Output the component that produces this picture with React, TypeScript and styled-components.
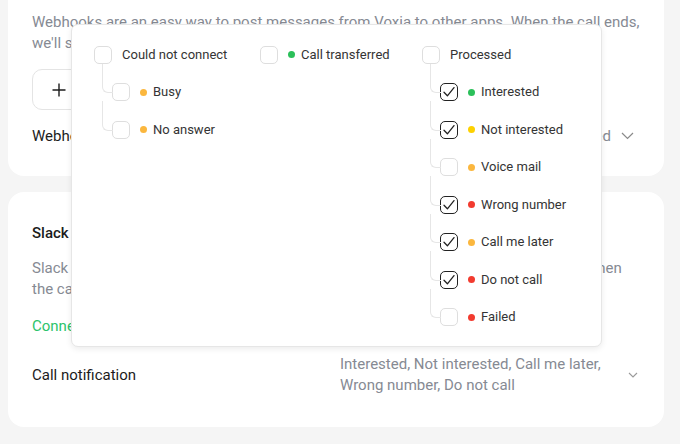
import React from 'react';
import styled, { createGlobalStyle, css } from 'styled-components';

const Global = createGlobalStyle`
  html, body { margin: 0; padding: 0; background: #f5f5f5; }
  body { font-family: Roboto, "Noto Sans", sans-serif; overflow: hidden; }
  * { box-sizing: border-box; }
`;

const Page = styled.div`
  position: relative;
  width: 680px;
  height: 444px;
  overflow: hidden;
  padding: 0 16px 0 8px;
  display: flex;
  flex-direction: column;
  gap: 16px;
`;

const Card = styled.section<{ $top?: number; $bottom?: number }>`
  background: #fff;
  border-radius: 16px;
  padding: 30px 24px ${(p) => p.$bottom ?? 29}px;
  margin-top: ${(p) => p.$top ?? 0}px;
  display: flex;
  flex-direction: column;
`;

const Title = styled.div`
  font-size: 15px;
  line-height: 22px;
  font-weight: 500;
  color: #1c1c1c;
`;

const Description = styled.p<{ $mt?: number }>`
  margin: ${(p) => p.$mt ?? 0}px 0 0;
  font-size: 15px;
  line-height: 21px;
  color: #868a93;
`;

const AddButton = styled.button`
  margin-top: 15px;
  height: 41px;
  width: 170px;
  border: 1px solid #e4e4e4;
  border-radius: 10px;
  background: #fff;
  display: flex;
  align-items: center;
  gap: 10px;
  padding: 0 0 0 19px;
  font: inherit;
  font-size: 15px;
  color: #1c1c1c;
`;

const LinkText = styled.div`
  margin-top: 15.5px;
  font-size: 15px;
  line-height: 22px;
  color: #2cc36b;
`;

const SettingRow = styled.div<{ $mt: number }>`
  margin-top: ${(p) => p.$mt}px;
  display: flex;
  align-items: center;
  justify-content: space-between;
`;

const SettingLabel = styled.div`
  font-size: 15px;
  line-height: 22px;
  color: #1c1c1c;
`;

const SettingValue = styled.div`
  width: 300px;
  display: flex;
  align-items: center;
  gap: 10px;
  justify-content: flex-end;
`;

const ValueText = styled.div<{ $align: 'left' | 'right' }>`
  flex: 1;
  font-size: 15px;
  line-height: 21px;
  color: #868a93;
  text-align: ${(p) => p.$align};
`;

const Chevron = styled.svg<{ $small?: boolean }>`
  flex: none;
  margin-right: ${(p) => (p.$small ? 2 : 6)}px;
`;

/* ---------- dropdown ---------- */

const Dropdown = styled.div`
  position: absolute;
  top: 24px;
  left: 71px;
  width: 531px;
  height: 323px;
  background: #fff;
  border: 1px solid #e6e6e6;
  border-radius: 7px;
  box-shadow: 0 2px 6px rgba(0, 0, 0, 0.08);
  padding: 11px 0 0 22px;
  display: grid;
  grid-template-columns: 166px 162px 1fr;
  align-items: start;
`;

const Group = styled.div`
  display: flex;
  flex-direction: column;
`;

const Row = styled.div<{ $child?: boolean }>`
  position: relative;
  height: 37.5px;
  display: flex;
  align-items: center;
  ${(p) =>
    p.$child &&
    css`
      padding-left: 18px;
      &::before {
        content: '';
        position: absolute;
        left: 8px;
        top: -9.75px;
        width: 10px;
        height: 28.5px;
        border-left: 1px solid #e6e6e6;
        border-bottom: 1px solid #e6e6e6;
        border-bottom-left-radius: 6px;
      }
    `}
`;

const Box = styled.span<{ $checked?: boolean }>`
  flex: none;
  width: 18px;
  height: 18px;
  border-radius: 5px;
  border: ${(p) => (p.$checked ? '1.4px solid #222' : '1px solid #dedede')};
  display: flex;
  align-items: center;
  justify-content: center;
  background: #fff;
`;

const Dot = styled.span<{ $color: string }>`
  flex: none;
  width: 7px;
  height: 7px;
  border-radius: 50%;
  background: ${(p) => p.$color};
  margin-left: 10px;
`;

const ItemLabel = styled.span<{ $withDot?: boolean }>`
  margin-left: ${(p) => (p.$withDot ? 6 : 10)}px;
  font-size: 13px;
  line-height: 20px;
  color: #343434;
  white-space: nowrap;
`;

const GREEN = '#2bc05a';
const YELLOW = '#fdd100';
const ORANGE = '#fbb73e';
const RED = '#f23b2f';

type Item = { label: string; color?: string; checked?: boolean };
type GroupData = { parent: Item; children: Item[] };

const groups: GroupData[] = [
  {
    parent: { label: 'Could not connect' },
    children: [
      { label: 'Busy', color: ORANGE },
      { label: 'No answer', color: ORANGE },
    ],
  },
  { parent: { label: 'Call transferred', color: GREEN }, children: [] },
  {
    parent: { label: 'Processed' },
    children: [
      { label: 'Interested', color: GREEN, checked: true },
      { label: 'Not interested', color: YELLOW, checked: true },
      { label: 'Voice mail', color: ORANGE },
      { label: 'Wrong number', color: RED, checked: true },
      { label: 'Call me later', color: ORANGE, checked: true },
      { label: 'Do not call', color: RED, checked: true },
      { label: 'Failed', color: RED },
    ],
  },
];

const Check = () => (
  <svg width="14" height="14" viewBox="0 0 14 14" fill="none">
    <path d="M2 7.2 L5.4 10.8 L12 2.6" stroke="#222" strokeWidth="1.3" strokeLinecap="round" strokeLinejoin="round" />
  </svg>
);

const ItemRow = ({ item, child }: { item: Item; child?: boolean }) => (
  <Row $child={child}>
    <Box $checked={item.checked}>{item.checked && <Check />}</Box>
    {item.color && <Dot $color={item.color} />}
    <ItemLabel $withDot={!!item.color}>{item.label}</ItemLabel>
  </Row>
);

const ChevronDown = ({ small }: { small?: boolean }) =>
  small ? (
    <Chevron $small width="10" height="6" viewBox="0 0 10 6" fill="none">
      <path d="M1 1 L5 5 L9 1" stroke="#9a9a9a" strokeWidth="1.1" />
    </Chevron>
  ) : (
    <Chevron width="13" height="8" viewBox="0 0 13 8" fill="none">
      <path d="M1 1 L6.5 6.5 L12 1" stroke="#8a8a8a" strokeWidth="1.2" />
    </Chevron>
  );

const Plus = () => (
  <svg width="14" height="14" viewBox="0 0 14 14" fill="none">
    <path d="M7 0.5 V13.5 M0.5 7 H13.5" stroke="#1c1c1c" strokeWidth="1.4" />
  </svg>
);

export default function App() {
  return (
    <>
      <Global />
      <Page>
        <Card $top={-18}>
          <Description>
            Webhooks are an easy way to post messages from Voxia to other apps. When the call ends,
            we'll send the call details to the URL you set up.
          </Description>
          <AddButton>
            <Plus />
            Add webhook
          </AddButton>
          <SettingRow $mt={15}>
            <SettingLabel>Webhook trigger</SettingLabel>
            <SettingValue>
              <ValueText $align="right">Processed</ValueText>
              <ChevronDown />
            </SettingValue>
          </SettingRow>
        </Card>
        <Card $bottom={31.5}>
          <Title>Slack</Title>
          <Description $mt={13.5}>
            Slack integration posts a new message to your chosen team channel automatically when
            the call ends, so your team can follow up quickly.
          </Description>
          <LinkText>Connect Slack</LinkText>
          <SettingRow $mt={16.5}>
            <SettingLabel>Call notification</SettingLabel>
            <SettingValue>
              <ValueText $align="left">
                Interested, Not interested, Call me later, Wrong number, Do not call
              </ValueText>
              <ChevronDown small />
            </SettingValue>
          </SettingRow>
        </Card>
        <Dropdown>
          {groups.map((g) => (
            <Group key={g.parent.label}>
              <ItemRow item={g.parent} />
              {g.children.map((c) => (
                <ItemRow key={c.label} item={c} child />
              ))}
            </Group>
          ))}
        </Dropdown>
      </Page>
    </>
  );
}
